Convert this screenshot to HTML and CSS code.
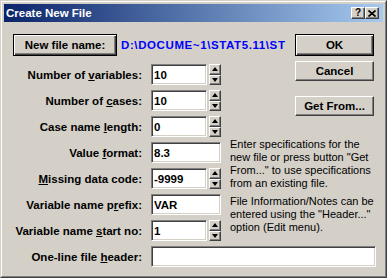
FILE: index.html
```html
<!DOCTYPE html>
<html lang="en">
  <head>
    <meta charset="UTF-8" />
    <title>Create New File</title>
    <link rel="stylesheet" href="styles.css">
  </head>
  <body>
    <div class="window">
      <div class="frame">
        <div class="titlebar">
          <span class="title">Create New File</span>
          <div class="caption-btns">
            <button class="cap">?</button>
            <button class="cap">
              <svg width="8" height="7" viewBox="0 0 8 7"><path d="M0.5 0.5 L7.5 6.5 M7.5 0.5 L0.5 6.5" stroke="#000" stroke-width="1.6" /></svg>
            </button>
          </div>
        </div>

        <div class="toprow">
          <button class="btn default namebtn">New file name:</button>
          <span class="path">D:\DOCUME~1\STAT5.11\ST</span>
          <button class="btn default okbtn">OK</button>
        </div>

        <div class="form">
          <label class="lbl"><span>Number of <u>v</u>ariables:</span></label>
          <div class="field"><input class="txt" value="10"><div class="spin"><span class="up"></span><span class="down"></span></div></div>

          <div class="side">
            <button class="btn sidebtn">Cancel</button>
            <button class="btn sidebtn getbtn">Get From...</button>
            <p class="note first">Enter specifications for the new file or press button "Get From..." to use specifications from an existing file.</p>
            <p class="note">File Information/Notes can be entered using the "Header..." option (Edit menu).</p>
          </div>

          <label class="lbl"><span>Number of <u>c</u>ases:</span></label>
          <div class="field"><input class="txt" value="10"><div class="spin"><span class="up"></span><span class="down"></span></div></div>

          <label class="lbl"><span>Case name <u>l</u>ength:</span></label>
          <div class="field"><input class="txt" value="0"><div class="spin"><span class="up"></span><span class="down"></span></div></div>

          <label class="lbl"><span>Value <u>f</u>ormat:</span></label>
          <div class="field"><input class="txt wide" value="8.3"></div>

          <label class="lbl"><span><u>M</u>issing data code:</span></label>
          <div class="field"><input class="txt" value="-9999"><div class="spin"><span class="up"></span><span class="down"></span></div></div>

          <label class="lbl"><span>Variable name p<u>r</u>efix:</span></label>
          <div class="field"><input class="txt wide" value="VAR"></div>

          <label class="lbl"><span>Variable name <u>s</u>tart no:</span></label>
          <div class="field"><input class="txt" value="1"><div class="spin"><span class="up"></span><span class="down"></span></div></div>

          <label class="lbl"><span>One-line file <u>h</u>eader:</span></label>
          <div class="field header"><input class="txt full" value=""></div>
        </div>
      </div>
    </div>
  </body>
</html>
```

FILE: styles.css
```css
* {
  margin: 0;
  padding: 0;
  box-sizing: border-box;
}
html,
body {
  width: 387px;
  height: 278px;
  overflow: hidden;
  background-color: #d4d0c8;
  font-family: "Liberation Sans", Arial, sans-serif;
}
.window {
  width: 387px;
  height: 278px;
  border: 1px solid;
  border-color: #d4d0c8 #404040 #404040 #d4d0c8;
}
.frame {
  height: 100%;
  border: 1px solid;
  border-color: #fff #808080 #808080 #fff;
  padding: 2px;
}
.titlebar {
  height: 18px;
  display: flex;
  align-items: center;
  justify-content: space-between;
  padding: 0 4px 0 2px;
  background: linear-gradient(to right, #0a246a, #a6caf0);
}
.title {
  color: #fff;
  font-weight: 700;
  font-size: 11.5px;
}
.caption-btns {
  display: flex;
}
.cap {
  width: 14px;
  height: 12px;
  display: flex;
  align-items: center;
  justify-content: center;
  background-color: #d4d0c8;
  border: 1px solid;
  border-color: #fff #404040 #404040 #fff;
  box-shadow: inset -1px -1px #808080;
  font-family: "Liberation Sans", Arial, sans-serif;
  font-weight: 700;
  font-size: 10px;
  line-height: 1;
  color: #000;
}
.btn {
  background-color: #d4d0c8;
  border: 1px solid;
  border-color: #fff #404040 #404040 #fff;
  box-shadow: inset -1px -1px #808080;
  font-family: "Liberation Sans", Arial, sans-serif;
  font-weight: 700;
  font-size: 11.5px;
  color: #000;
}
.btn.default {
  height: 22px;
  border-color: #000;
  box-shadow: inset 1px 1px #fff, inset -1px -1px #404040, inset -2px -2px #808080;
}
.toprow {
  display: flex;
  align-items: center;
  margin-top: 12px;
  padding-left: 9px;
}
.namebtn {
  width: 104px;
}
.path {
  width: 170px;
  margin-left: 4px;
  overflow: hidden;
  white-space: nowrap;
  color: #0000ff;
  font-weight: 700;
  font-size: 11.5px;
  letter-spacing: 0.6px;
}
.okbtn {
  width: 79px;
  margin-left: auto;
  margin-right: 9px;
}
.form {
  display: grid;
  grid-template-columns: 138px 70px 1fr;
  grid-template-rows: repeat(8, 21px);
  column-gap: 9px;
  row-gap: 5px;
  margin-top: 8px;
}
.lbl {
  grid-column: 1;
  display: flex;
  align-items: center;
  justify-content: flex-end;
  font-weight: 700;
  font-size: 11.5px;
  white-space: nowrap;
}
.field {
  grid-column: 2;
  display: flex;
  gap: 1px;
}
.field.header {
  grid-column: 2 / 4;
  padding-right: 7px;
}
.txt {
  width: 56px;
  height: 21px;
  padding-left: 2px;
  background-color: #fff;
  border: 1px solid;
  border-color: #808080 #fff #fff #808080;
  box-shadow: inset 1px 1px #404040, inset -1px -1px #d4d0c8;
  font-family: "Liberation Sans", Arial, sans-serif;
  font-weight: 700;
  font-size: 11.5px;
  color: #000;
  outline: none;
}
.txt.wide {
  width: 70px;
}
.txt.full {
  width: 100%;
}
.spin {
  width: 13px;
  height: 21px;
  margin-left: 1px;
  display: flex;
  flex-direction: column;
}
.spin span {
  flex: 1;
  display: flex;
  align-items: center;
  justify-content: center;
  background-color: #d4d0c8;
  border: 1px solid;
  border-color: #fff #404040 #404040 #fff;
  box-shadow: inset -1px -1px #808080;
}
.spin .up::after,
.spin .down::after {
  content: "";
  border-left: 3.5px solid transparent;
  border-right: 3.5px solid transparent;
}
.spin .up::after {
  border-bottom: 4px solid #000;
}
.spin .down::after {
  border-top: 4px solid #000;
}
.side {
  grid-column: 3;
  grid-row: 1 / 8;
  display: flex;
  flex-direction: column;
  align-items: flex-start;
}
.sidebtn {
  width: 79px;
  height: 20px;
  align-self: flex-end;
  margin-right: 9px;
  margin-top: -3px;
}
.getbtn {
  margin-top: 15px;
}
.note {
  font-size: 11px;
  line-height: 13px;
  width: 145px;
  margin-top: 5px;
}
.note.first {
  margin-top: 22px;
}
```
